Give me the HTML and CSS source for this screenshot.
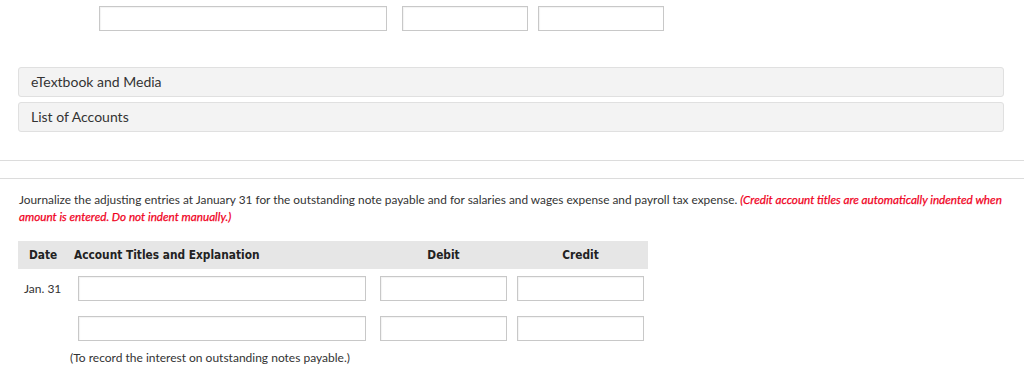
FILE: index.html
```html
<!DOCTYPE html>
<html>
<head>
<meta charset="utf-8">
<link rel="stylesheet" href="styles.css">
</head>
<body>
<div class="top-row">
  <div class="field field-title"></div>
  <div class="field field-amt"></div>
  <div class="field field-amt"></div>
</div>
<div class="panels">
  <div class="panel">eTextbook and Media</div>
  <div class="panel">List of Accounts</div>
</div>
<hr class="rule rule-1">
<hr class="rule rule-2">
<p class="question">Journalize the adjusting entries at January 31 for the outstanding note payable and for salaries and wages expense and payroll tax expense. <em class="note">(Credit account titles are automatically indented when amount is entered. Do not indent manually.)</em></p>
<div class="journal">
  <div class="jhead">
    <div class="c-date">Date</div>
    <div class="c-acct">Account Titles and Explanation</div>
    <div class="c-num">Debit</div>
    <div class="c-num">Credit</div>
  </div>
  <div class="jrow">
    <div class="c-date date-text">Jan. 31</div>
    <div class="c-acct"><div class="field field-jt"></div></div>
    <div class="c-num"><div class="field field-ja"></div></div>
    <div class="c-num"><div class="field field-ja"></div></div>
  </div>
  <div class="jrow jrow-2">
    <div class="c-date"></div>
    <div class="c-acct"><div class="field field-jt"></div></div>
    <div class="c-num"><div class="field field-ja"></div></div>
    <div class="c-num"><div class="field field-ja"></div></div>
  </div>
  <div class="caption">(To record the interest on outstanding notes payable.)</div>
</div>
</body>
</html>
```
FILE: styles.css
```css
* { box-sizing: border-box; }
body {
  margin: 0;
  font-family: Lato, "Open Sans", sans-serif;
  color: #333;
  background: #fff;
}
.field {
  height: 25px;
  border: 1px solid #c8c8c8;
  background: #fff;
  box-shadow: inset 1px 1px 1px rgba(0,0,0,0.05);
}
.top-row {
  display: flex;
  padding: 6px 0 0 99px;
  height: 31px;
}
.field-title { width: 288px; margin-right: 15px; }
.field-amt { width: 126px; margin-right: 10px; }
.panels {
  padding: 36px 0 0 18px;
  width: 1004px;
  display: flex;
  flex-direction: column;
  gap: 5px;
}
.panel {
  height: 30px;
  background: #f3f3f3;
  border: 1px solid #e0e0e0;
  border-radius: 3px;
  font-size: 14px;
  line-height: 28px;
  padding-left: 12px;
  color: #333;
}
.rule {
  margin: 0;
  border: 0;
  border-top: 1px solid #dcdcdc;
  height: 0;
}
.rule-1 { margin-top: 28px; }
.rule-2 { margin-top: 17px; }
.question {
  margin: 12px 0 0 19px;
  width: 1000px;
  font-size: 11.85px;
  line-height: 16px;
  color: #333;
}
.note {
  color: #f0001c;
  font-style: italic;
  font-weight: normal;
  font-size: 11.7px;
  -webkit-text-stroke: 0.25px #f0001c;
}
.journal {
  margin: 16px 0 0 18px;
  width: 630px;
}
.jhead {
  display: flex;
  align-items: center;
  height: 28px;
  background: #e6e6e6;
  font-family: "DejaVu Sans Condensed", "DejaVu Sans", Verdana, sans-serif;
  font-weight: bold;
  font-size: 11.8px;
  color: #222;
}
.jhead .c-date { padding-left: 11px; width: 56px; }
.c-date { width: 60px; flex: none; }
.c-acct { width: 302px; flex: none; }
.c-num { width: 137px; flex: none; }
.jhead .c-num { text-align: center; padding-right: 10px; }
.jhead .c-acct { width: 306px; }
.jrow {
  display: flex;
  align-items: center;
  margin-top: 7px;
  height: 25px;
}
.jrow-2 { margin-top: 15px; }
.date-text {
  font-size: 12px;
  padding-left: 6px;
  color: #333;
}
.field-jt { width: 288px; }
.field-ja { width: 127px; }
.caption {
  font-size: 12px;
  padding-left: 52px;
  margin-top: 9px;
  color: #333;
}
```
